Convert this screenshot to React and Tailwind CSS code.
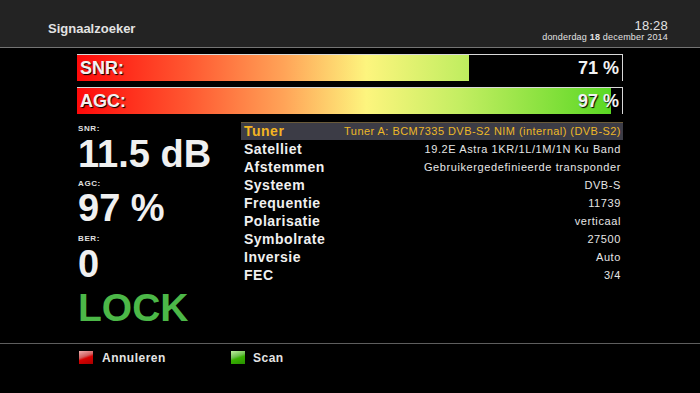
import React from 'react';

const rows = [
  ['Satelliet', '19.2E Astra 1KR/1L/1M/1N Ku Band'],
  ['Afstemmen', 'Gebruikergedefinieerde transponder'],
  ['Systeem', 'DVB-S'],
  ['Frequentie', '11739'],
  ['Polarisatie', 'verticaal'],
  ['Symbolrate', '27500'],
  ['Inversie', 'Auto'],
  ['FEC', '3/4'],
];

function Bar({ label, value }) {
  // the receiver draws the fill about one percent past the value
  return (
    <div className="relative h-[27px] w-[546px] border-t border-r border-[#d8d8d8] bg-black">
      <div className="h-full overflow-hidden" style={{ width: `${value + 1}%` }}>
        <div className="h-full w-[546px] bg-[linear-gradient(to_right,#ff0a0a_0%,#ff5630_20%,#ffa458_38%,#fdf57e_53%,#c4ee62_70%,#52d61e_100%)]" />
      </div>
      <span className="absolute left-[3px] top-0 text-[18px] leading-[27px] font-bold text-[#f2f2f2] [text-shadow:1px_1px_1px_#000]">{label}</span>
      <span className="absolute right-[3px] top-0 text-[18px] leading-[27px] font-bold text-[#f2f2f2] [text-shadow:1px_1px_1px_#000]">{value} %</span>
    </div>
  );
}

export default function App() {
  return (
    <div className="w-[700px] h-[393px] bg-black overflow-hidden font-['Liberation_Sans',Arial,sans-serif] text-white">
      {/* header */}
      <div className="h-[48px] bg-[#232323] border-b border-[#747474] flex items-end justify-between pl-[48px] pr-[32px] pb-[4px]">
        <div className="text-[13px] font-bold text-[#e2e2e2] leading-[16px] mb-[6px]">Signaalzoeker</div>
        <div className="flex flex-col items-end text-[#e2e2e2]">
          <div className="text-[13px] leading-[13px] tracking-[0.2px]">18:28</div>
          <div className="text-[9px] leading-[11px] tracking-[0.2px]">donderdag <b>18</b> december 2014</div>
        </div>
      </div>

      {/* bars */}
      <div className="pl-[77px] pt-[6px] flex flex-col gap-[6px]">
        <Bar label="SNR:" value={71} />
        <Bar label="AGC:" value={97} />
      </div>

      <div className="flex pt-[8px] h-[229px]">
        {/* left values */}
        <div className="w-[241px] pl-[78px] pt-[1px] flex flex-col">
          <div className="h-[11px] text-[8px] leading-[11px] font-bold tracking-[0.6px] text-[#e0e0e0]">SNR:</div>
          <div className="mt-[4px] h-[32px] text-[38px] leading-[32px] font-bold whitespace-nowrap text-[#f0f0f0]">11.5 dB</div>
          <div className="mt-[8px] h-[11px] text-[8px] leading-[11px] font-bold tracking-[0.6px] text-[#e0e0e0]">AGC:</div>
          <div className="mt-[3px] h-[32px] text-[38px] leading-[32px] font-bold whitespace-nowrap text-[#f0f0f0]">97 %</div>
          <div className="mt-[9px] h-[11px] text-[8px] leading-[11px] font-bold tracking-[0.6px] text-[#e0e0e0]">BER:</div>
          <div className="mt-[4px] h-[32px] text-[38px] leading-[32px] font-bold text-[#f0f0f0]">0</div>
          <div className="mt-[12px] h-[32px] text-[39px] leading-[32px] font-bold text-[#4cb848]">LOCK</div>
        </div>

        {/* info table */}
        <div className="w-[382px] flex flex-col">
          <div className="h-[18px] flex items-center justify-between bg-[#3c3c46] border-t border-[#6a5a3a] pl-[3px] pr-[2px]">
            <span className="text-[14px] font-bold tracking-[0.5px] text-[#f2b422]">Tuner</span>
            <span className="text-[11px] tracking-[0.45px] text-[#edb828]">Tuner A: BCM7335 DVB-S2 NIM (internal) (DVB-S2)</span>
          </div>
          {rows.map(([k, v]) => (
            <div key={k} className="h-[18px] flex items-center justify-between pl-[3px] pr-[2px]">
              <span className="text-[14px] font-bold tracking-[0.5px] text-[#f0f0f0]">{k}</span>
              <span className="text-[11px] tracking-[0.6px] text-[#e6e6e6]">{v}</span>
            </div>
          ))}
        </div>
      </div>

      {/* footer */}
      <div className="border-t border-[#5e5e5e] flex items-center h-[28px] pl-[79px]">
        <div className="flex items-center w-[152px]">
          <div className="w-[14px] h-[13px] bg-[linear-gradient(160deg,#f0b0b0_0%,#d06060_40%,#d80000_55%,#a80000_100%)]" />
          <span className="ml-[9px] text-[12px] font-bold tracking-[0.5px] text-[#e4e4e4]">Annuleren</span>
        </div>
        <div className="flex items-center">
          <div className="w-[14px] h-[13px] bg-[linear-gradient(160deg,#c0f0a0_0%,#70c050_40%,#38b000_55%,#289000_100%)]" />
          <span className="ml-[8px] text-[12px] font-bold tracking-[0.5px] text-[#e4e4e4]">Scan</span>
        </div>
      </div>
    </div>
  );
}
